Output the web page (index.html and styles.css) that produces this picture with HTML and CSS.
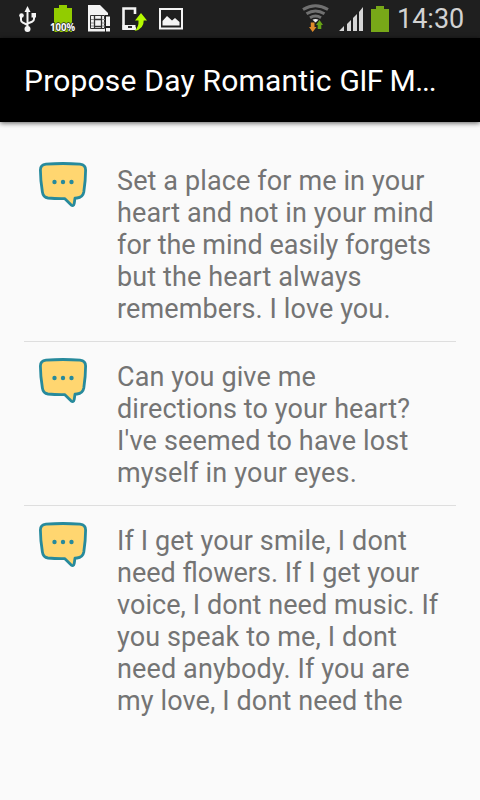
FILE: index.html
```html
<!DOCTYPE html>
<html lang="en">
<head>
<meta charset="utf-8">
<title>Propose Day Romantic GIF Messages</title>
<link rel="stylesheet" href="styles.css">
</head>
<body>
<svg width="0" height="0" class="defs" aria-hidden="true">
  <symbol id="chat" viewBox="0 0 48 48">
    <path d="M7 2.200Q24 .8 41 2.200Q46.600 2.800 46.600 8Q46.600 18 44.800 30Q43.800 35.400 38 36L36 36.200L35.200 41.600Q34.600 44.800 32 42.800L25.600 36.600Q17 36.800 9 36Q4.200 35.400 3.400 30Q1.400 18 1.400 8Q1.400 2.800 7 2.200Z" fill="#ffd670" stroke="#278a9c" stroke-width="2.800" stroke-linejoin="round"/>
    <circle cx="15.500" cy="20" r="2.200" fill="#278a9c"/><circle cx="24" cy="20" r="2.200" fill="#278a9c"/><circle cx="32.500" cy="20" r="2.200" fill="#278a9c"/>
  </symbol>
</svg>
<div class="screen">
  <header class="status">
    <svg class="glyphs" width="200" height="38" viewBox="0 0 200 38">
      <g fill="none" stroke="#f4f4f4" stroke-width="2">
        <path d="M27.500 10V29M21 16V20Q21 22 23 22.700L27.500 25M34 16V19Q34 21 32 21.700L27.500 23.500"/>
      </g>
      <g fill="#f4f4f4"><path d="M27.500 6L30.500 12H24.500Z"/><circle cx="21.500" cy="15.500" r="2.300"/><path d="M31.500 13h4.500v4.500h-4.500z"/><circle cx="27.500" cy="29" r="3"/></g>
      <path d="M59 5h8v3h5v24H54V8h5z" fill="#92cc00"/>
      <text x="50" y="30.500" class="percent" textLength="25" lengthAdjust="spacingAndGlyphs">100%</text>
      <path d="M88 5h12l8 8v3h2v15.500H88z" fill="#f4f4f4"/>
      <path d="M90.500 15.500h14v13h-14z" fill="#f4f4f4" stroke="#333"/>
      <path d="M94.500 15.500v13M101.500 15.500v13M94.500 19.500h7M94.500 26.500h7" fill="none" stroke="#333" stroke-width="1.300"/>
      <path d="M91 19.500h3M91 23h3M91 26h3M102 19.500h3M102 23h3M102 26h3" stroke="#888"/>
      <path d="M105 15h6v17h-6z" fill="#1f1f1f"/><path d="M106 16.500h4V26h-4zM106 28h4v3.500h-4z" fill="#f4f4f4"/>
      <path d="M135 14V8.500H123.500V28.500H136" fill="none" stroke="#f4f4f4" stroke-width="2.600"/>
      <path d="M122.500 25h13v5h-13z" fill="#f4f4f4"/><path d="M128 26h4v2h-4z" fill="#333"/>
      <path d="M141 13L147 20.500H143.700Q144 29 134.500 31Q139 27 138.500 20.500H135z" fill="#b5fa00"/>
      <path d="M160 9h22v19.500h-22z" fill="none" stroke="#f4f4f4" stroke-width="2"/>
      <path d="M162.500 25.500V21L167 16L172 20.500L175 18L179.500 22V25.500Z" fill="#f4f4f4"/>
    </svg>
    <div class="right">
      <svg class="glyphs" width="90" height="38" viewBox="300 0 90 38">
        <g fill="none" stroke="#707070" stroke-width="3"><path d="M303 9.500Q315.500 2 328 9.500M306.500 13.800Q315.500 8.300 324.500 13.800M310 17.700Q315.500 14.400 321 17.700"/></g>
        <path d="M312.500 19.800Q315.500 18 318.500 19.800L315.500 22.500Z" fill="#f0f0f0"/>
        <path d="M310.800 22.500h3.700v4.500h2L312.700 32L309 27h1.800z" fill="#e08b29"/>
        <path d="M319.500 20L323 25h-1.700v4h-3.600v-4H316z" fill="#66a315"/>
        <path d="M339 31l5-5v5zM347 31v-7l4-4v11zM353 31V18l4-4v17zM359 31V12l4-5v24z" fill="#d5d5d5"/>
        <path d="M376 6h8v3h-0v0h5v23h-18V9h5z" fill="#78a818"/>
      </svg>
      <time class="clock">14:30</time>
    </div>
  </header>
  <div class="appbar"><h1>Propose Day Romantic <span class="caps">GIF M</span><span class="dots">...</span></h1></div>
  <main>
    <article><svg class="chat"><use href="#chat"/></svg><p>Set a place for me in your<br>heart and not in your mind<br><span class="tight">for the mind easily forgets</span><br>but the heart always<br>remembers. I love you.</p></article>
    <article><svg class="chat"><use href="#chat"/></svg><p>Can you give me<br>directions to your heart?<br><span class="loose">I've seemed to have lost</span><br><span class="loose">myself in your eyes.</span></p></article>
    <article><svg class="chat"><use href="#chat"/></svg><p>If I get your smile, I dont<br><span class="tight">need flowers. If I get your</span><br><span class="snug">voice, I dont need music. If</span><br>you speak to me, I dont<br>need anybody. If you are<br>my love, I dont need the</p></article>
  </main>
</div>
</body>
</html>
```
FILE: styles.css
```css
* { box-sizing: border-box; }
body { margin: 0; font-family: Roboto, sans-serif; background: #fafafa; }
.defs { display: block; }
.screen { width: 480px; height: 800px; overflow: hidden; }
.status { height: 38px; background: #1f1f1f; display: flex; justify-content: space-between; }
.glyphs { display: block; }
.percent { font: bold 10.500px "Open Sans", sans-serif; fill: #fff; stroke: #1f1f1f; stroke-width: 1.500px; paint-order: stroke; }
.right { display: flex; width: 180px; }
.clock { color: #d2d2d2; font-size: 27px; line-height: 38px; padding-left: 7px; white-space: nowrap; }
.appbar { height: 84px; background: #000; display: flex; align-items: center; padding: 2px 0 0 24px; box-shadow: 0 1px 5px rgba(0, 0, 0, .65); }
h1 { margin: 0; color: #fff; font-size: 30px; line-height: 36px; font-weight: 400; letter-spacing: .2px; white-space: nowrap; }
.caps { letter-spacing: -.6px; }
.dots { letter-spacing: -1.100px; }
main { padding: 24px 24px 0; }
article { display: flex; padding: 16px 0 16px 15px; border-bottom: 1px solid #dedede; }
article:last-child { border-bottom: 0; }
.chat { width: 48px; height: 48px; margin-right: 30px; flex: none; }
p { margin: 3px 0 0; color: #747474; font-size: 27px; line-height: 32px; letter-spacing: .12px; white-space: nowrap; }
.tight { letter-spacing: 0; }
.snug { letter-spacing: .06px; }
.loose { letter-spacing: .18px; }
```
